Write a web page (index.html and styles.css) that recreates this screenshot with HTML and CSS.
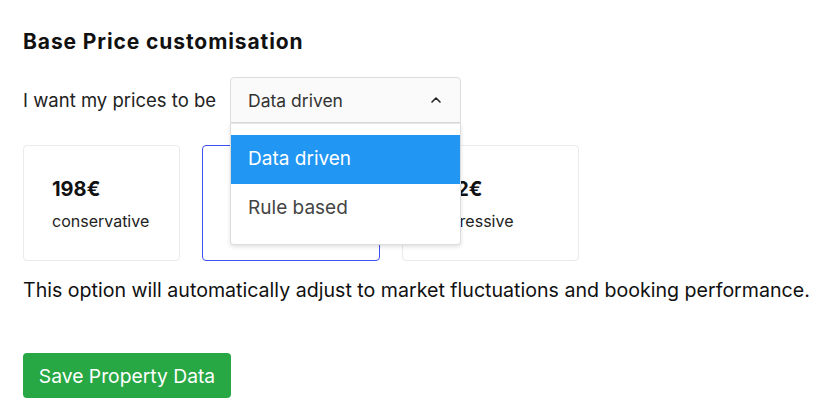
FILE: index.html
```html
<!DOCTYPE html>
<html lang="en">
<head>
    <meta charset="UTF-8">
    <meta name="viewport" content="width=device-width, initial-scale=1.0">
    <title>Base Price customisation</title>
    <link rel="stylesheet" href="styles.css">
</head>
<body>
    <div class="container">
        <h2>Base Price customisation</h2>
        <div class="mode-row">
            <span class="mode-label">I want my prices to be</span>
            <div class="select">
                <div class="select-box">
                    <span>Data driven</span>
                    <svg class="chevron" width="12" height="8" viewBox="0 0 12 8">
                        <path d="M2 6 L6 2 L10 6" fill="none" stroke="#222" stroke-width="1.6" stroke-linecap="round" stroke-linejoin="round"/>
                    </svg>
                </div>
                <ul class="select-menu">
                    <li class="active">Data driven</li>
                    <li>Rule based</li>
                </ul>
            </div>
        </div>
        <div class="cards">
            <div class="card">
                <div class="price">198€</div>
                <div class="kind">conservative</div>
            </div>
            <div class="card selected">
                <div class="price">210€</div>
                <div class="kind">balanced</div>
            </div>
            <div class="card wide">
                <div class="price">222€</div>
                <div class="kind">aggressive</div>
            </div>
        </div>
        <p class="note">This option will automatically adjust to market fluctuations and booking performance.</p>
        <button class="save">Save Property Data</button>
    </div>
</body>
</html>
```

FILE: styles.css
```css
body {
    font-family: Inter, "Noto Sans", sans-serif;
    margin: 0;
    padding: 0;
    color: #111;
    background: #fff;
}
.container {
    padding: 29px 0 29px 23px;
}
h2 {
    font-size: 21px;
    font-weight: 700;
    letter-spacing: 0.9px;
    line-height: 26px;
    margin: 0 0 22px;
}
.mode-row {
    display: flex;
    align-items: center;
    gap: 14px;
}
.mode-label {
    font-size: 18.5px;
    color: #222;
}
.select {
    position: relative;
    width: 231px;
}
.select-box {
    display: flex;
    align-items: center;
    justify-content: space-between;
    height: 44px;
    padding: 0 18px 0 17px;
    border: 1px solid #ddd;
    border-radius: 4px 4px 0 0;
    background: #fafafa;
    font-size: 17.5px;
    color: #333;
}
.select-menu {
    position: absolute;
    top: 46px;
    left: 0;
    right: 0;
    z-index: 2;
    list-style: none;
    margin: 0;
    padding: 11px 0;
    background: #fff;
    border: 1px solid #ddd;
    border-top-color: #e4e4e4;
    border-radius: 0 0 4px 4px;
    box-shadow: 0 2px 4px rgba(0, 0, 0, 0.12);
}
.select-menu li {
    height: 49px;
    line-height: 48px;
    padding: 0 17px;
    font-size: 19px;
    color: #444;
}
.select-menu li.active {
    background: #2196f3;
    color: #fff;
}
.cards {
    display: flex;
    gap: 22px;
    margin-top: 22px;
}
.card {
    width: 157px;
    height: 116px;
    box-sizing: border-box;
    padding: 31px 28px;
    border: 1px solid #eaeaea;
    border-radius: 4px;
}
.card.selected {
    width: 178px;
    border-color: #3f4ff0;
}
.card.wide {
    width: 177px;
}
.price {
    font-size: 20px;
    font-weight: 700;
    color: #111;
}
.kind {
    margin-top: 10px;
    font-size: 16px;
    color: #222;
}
.note {
    font-size: 19.6px;
    white-space: nowrap;
    margin: 17px 0 0;
    color: #111;
}
.save {
    margin-top: 51px;
    height: 45px;
    width: 208px;
    border: none;
    border-radius: 4px;
    background: #28a745;
    color: #fff;
    font-family: inherit;
    font-size: 19.3px;
    cursor: pointer;
}
```
